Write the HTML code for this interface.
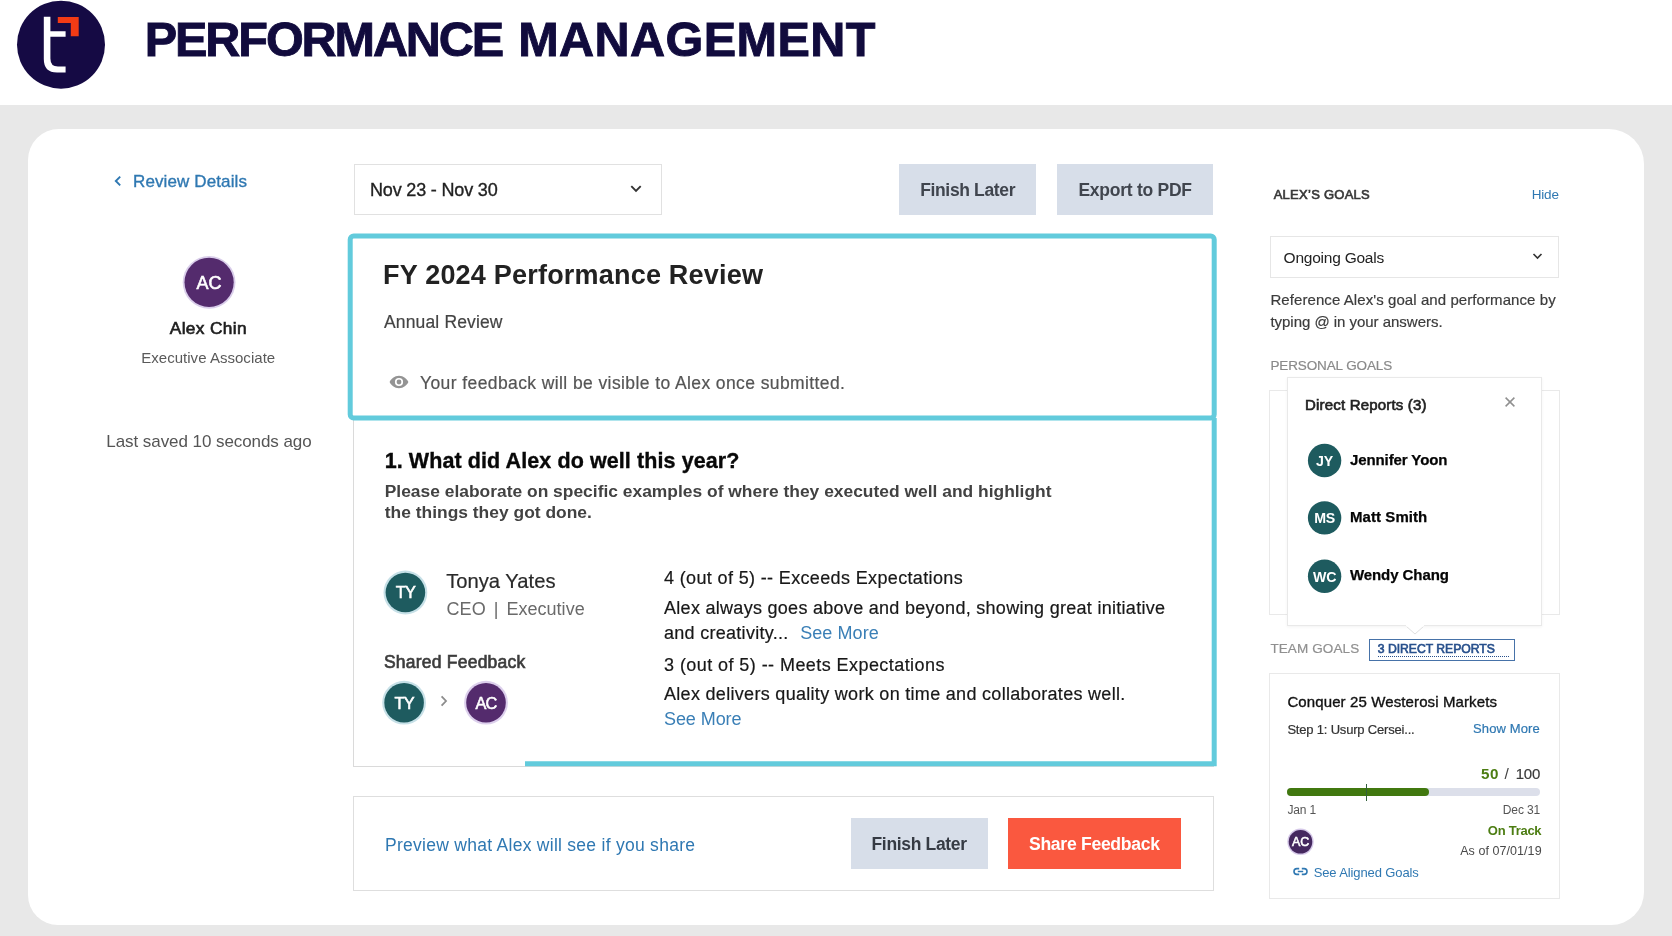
<!DOCTYPE html>
<html><head><meta charset="utf-8"><title>Performance Management</title>
<style>
html,body{margin:0;padding:0;}
body{width:1672px;height:936px;overflow:hidden;background:#e8e8e8;position:relative;font-family:"Liberation Sans",sans-serif;}
.b{position:absolute;display:block;}
.t{position:absolute;white-space:nowrap;display:block;}
.av{position:absolute;color:#fff;text-align:center;font-weight:400;-webkit-text-stroke:0.55px #fff;white-space:nowrap;}
#root{position:absolute;left:0;top:0;width:1672px;height:936px;will-change:transform;}
</style></head><body><div id="root">
<div class="b" style="left:0.0px;top:0.0px;width:1672.0px;height:104.7px;background:#fff;"></div>
<div class="b" style="left:27.5px;top:128.7px;width:1616.6px;height:796.2px;background:#fff;border-radius:31px 35px 33px 30px;"></div>
<svg class="b" style="left:16px;top:0px" width="92" height="92" viewBox="0 0 92 92">
<circle cx="45" cy="44.7" r="44" fill="#150a44"/>
<path d="M27.8 16.7 H34.4 V31.2 H49.6 V36.8 H34.4 V58.5 Q34.4 66.6 42 66.6 H49.6 V72.5 H41 Q27.8 72.5 27.8 59 Z" fill="#fff"/>
<path d="M41.8 17 H62.7 V36.2 H54.8 V22.9 H41.8 Z" fill="#f33b15"/>
</svg>
<svg class="b" style="left:111.6px;top:174px" width="12" height="14" viewBox="0 0 12 14"><path d="M8.2 2.6 L3.8 7 L8.2 11.4" fill="none" stroke="#2f78b2" stroke-width="1.9"/></svg>
<svg class="b" style="left:181px;top:254px" width="56" height="56" viewBox="0 0 56 56"><circle cx="28.10" cy="28.30" r="26.40" fill="#d9cdea"/><circle cx="28.10" cy="28.30" r="24.60" fill="#542b6d"/></svg><div class="av" style="left:179.10px;top:258.10px;width:60px;height:50px;font-size:18px;line-height:50px;letter-spacing:0px;">AC</div>
<div class="b" style="left:354.0px;top:164.0px;width:308.0px;height:50.5px;border:1px solid #e1e1e1;box-sizing:border-box;background:#fff;"></div>
<svg class="b" style="left:629px;top:183px" width="14" height="12" viewBox="0 0 14 12"><path d="M2.3 3.2 L7 7.9 L11.7 3.2" fill="none" stroke="#333" stroke-width="1.9"/></svg>
<div class="b" style="left:899.2px;top:164.0px;width:136.8px;height:50.5px;background:#d7dee9;"></div>
<div class="b" style="left:1057.0px;top:164.0px;width:156.0px;height:50.5px;background:#d7dee9;"></div>
<div class="b" style="left:353.0px;top:418.0px;width:861.0px;height:349.0px;border:1px solid #dadada;box-sizing:border-box;"></div>
<svg class="b" style="left:340px;top:225px" width="890" height="550" viewBox="340 225 890 550">
<rect x="350.2" y="236" width="864" height="182" rx="3.5" fill="none" stroke="#62cbdc" stroke-width="5"/>
<path d="M1214.2 418 V763.8 H525" fill="none" stroke="#62cbdc" stroke-width="5"/>
</svg>
<svg class="b" style="left:389px;top:374px" width="20" height="16" viewBox="0 0 20 16"><path d="M10 1.8 C5.5 1.8 2 5 0.6 8 C2 11 5.5 14.2 10 14.2 C14.5 14.2 18 11 19.4 8 C18 5 14.5 1.8 10 1.8 Z M10 12.1 A4.1 4.1 0 1 1 10 3.9 A4.1 4.1 0 0 1 10 12.1 Z M10 5.6 A2.4 2.4 0 1 0 10 10.4 A2.4 2.4 0 0 0 10 5.6 Z" fill="#949494" fill-rule="evenodd"/></svg>
<svg class="b" style="left:382px;top:569px" width="47" height="47" viewBox="0 0 47 47"><circle cx="23.40" cy="23.50" r="21.90" fill="#c6e0e7"/><circle cx="23.40" cy="23.50" r="19.80" fill="#1e5b5f"/></svg><div class="av" style="left:375.40px;top:572.30px;width:60px;height:40px;font-size:16.3px;line-height:40px;letter-spacing:-0.7px;">TY</div>
<svg class="b" style="left:381px;top:679px" width="47" height="47" viewBox="0 0 47 47"><circle cx="23.10" cy="23.70" r="21.90" fill="#c6e0e7"/><circle cx="23.10" cy="23.70" r="19.80" fill="#1e5b5f"/></svg><div class="av" style="left:374.10px;top:682.50px;width:60px;height:40px;font-size:16.3px;line-height:40px;letter-spacing:-0.7px;">TY</div>
<svg class="b" style="left:463px;top:679px" width="47" height="47" viewBox="0 0 47 47"><circle cx="23.00" cy="23.70" r="21.90" fill="#dccfec"/><circle cx="23.00" cy="23.70" r="19.80" fill="#542b6d"/></svg><div class="av" style="left:456.00px;top:682.50px;width:60px;height:40px;font-size:16.3px;line-height:40px;letter-spacing:-0.7px;">AC</div>
<svg class="b" style="left:438px;top:693.5px" width="12" height="14" viewBox="0 0 12 14"><path d="M3.6 2.4 L8 7 L3.6 11.6" fill="none" stroke="#8c8c8c" stroke-width="1.8"/></svg>
<div class="b" style="left:353.0px;top:796.3px;width:860.5px;height:94.7px;border:1px solid #dedede;box-sizing:border-box;"></div>
<div class="b" style="left:851.0px;top:818.0px;width:137.0px;height:50.6px;background:#d7dee9;"></div>
<div class="b" style="left:1008.0px;top:818.0px;width:173.3px;height:50.6px;background:#fa583f;"></div>
<div class="b" style="left:1270.0px;top:236.0px;width:288.6px;height:41.5px;border:1px solid #e6e6e6;box-sizing:border-box;"></div>
<svg class="b" style="left:1531px;top:251px" width="13" height="11" viewBox="0 0 13 11"><path d="M2.5 3 L6.5 7 L10.5 3" fill="none" stroke="#333" stroke-width="1.6"/></svg>
<div class="b" style="left:1269.0px;top:390.0px;width:291.0px;height:225.3px;border:1px solid #e9e9e9;box-sizing:border-box;"></div>
<div class="b" style="left:1287.0px;top:376.8px;width:255.4px;height:249.6px;border:1px solid #e9e9e9;box-sizing:border-box;background:#fff;box-shadow:0 1px 3px rgba(0,0,0,0.05);"></div>
<svg class="b" style="left:1404px;top:624.6px" width="22" height="11" viewBox="0 0 22 11"><path d="M2 1 L11 9 L20 1" fill="#fff" stroke="#e0e0e0" stroke-width="1"/><rect x="2" y="0" width="18" height="1.6" fill="#fff"/></svg>
<svg class="b" style="left:1503px;top:395px" width="14" height="14" viewBox="0 0 14 14"><path d="M2.6 2.6 L11.4 11.4 M11.4 2.6 L2.6 11.4" fill="none" stroke="#909090" stroke-width="1.5"/></svg>
<svg class="b" style="left:1306px;top:442px" width="37" height="37" viewBox="0 0 37 37"><circle cx="18.60" cy="18.50" r="16.70" fill="#1e5b5f"/></svg><div class="av" style="left:1294.60px;top:443.80px;width:60px;height:34px;font-size:14.2px;line-height:34px;letter-spacing:-0.2px;font-weight:700;-webkit-text-stroke:0;">JY</div>
<svg class="b" style="left:1306px;top:500px" width="37" height="37" viewBox="0 0 37 37"><circle cx="18.60" cy="17.90" r="16.70" fill="#1e5b5f"/></svg><div class="av" style="left:1294.60px;top:501.20px;width:60px;height:34px;font-size:14.2px;line-height:34px;letter-spacing:-0.2px;font-weight:700;-webkit-text-stroke:0;">MS</div>
<svg class="b" style="left:1306px;top:558px" width="37" height="37" viewBox="0 0 37 37"><circle cx="18.60" cy="18.20" r="16.70" fill="#1e5b5f"/></svg><div class="av" style="left:1294.60px;top:559.50px;width:60px;height:34px;font-size:14.2px;line-height:34px;letter-spacing:-0.2px;font-weight:700;-webkit-text-stroke:0;">WC</div>
<div class="b" style="left:1369.0px;top:639.0px;width:146.0px;height:22.0px;border:1px solid #4672a8;box-sizing:border-box;"></div>
<div class="b" style="left:1377.8px;top:656.2px;width:130.8px;height:1.4px;border-top:1.4px dotted #28508c;height:0;"></div>
<div class="b" style="left:1269.0px;top:673.0px;width:291.0px;height:225.7px;border:1px solid #e9e9e9;box-sizing:border-box;"></div>
<div class="b" style="left:1287.4px;top:788.3px;width:252.9px;height:8.0px;background:#dcdfea;border-radius:4px;"></div>
<div class="b" style="left:1287.4px;top:788.3px;width:141.7px;height:8.0px;background:#41780f;border-radius:4px;"></div>
<div class="b" style="left:1365.5px;top:784.0px;width:1.2px;height:16.5px;background:#32603a;"></div>
<svg class="b" style="left:1286px;top:827px" width="30" height="30" viewBox="0 0 30 30"><circle cx="14.50" cy="14.80" r="13.20" fill="#d5c8e8"/><circle cx="14.50" cy="14.80" r="11.80" fill="#45285f"/></svg><div class="av" style="left:1270.50px;top:830.10px;width:60px;height:24px;font-size:12.5px;line-height:24px;letter-spacing:-0.3px;">AC</div>
<svg class="b" style="left:1292px;top:865.2px" width="17" height="13" viewBox="0 0 17 13"><path d="M7.2 3.6 H4.9 A2.9 2.9 0 0 0 4.9 9.4 H7.2 M9.8 3.6 H12.1 A2.9 2.9 0 0 1 12.1 9.4 H9.8 M5.8 6.5 H11.2" fill="none" stroke="#2f78b2" stroke-width="1.6"/></svg>
<span class="t" style="left:144.8px;top:7.7px;font-size:48.6px;line-height:63px;color:#110b3d;font-weight:700;letter-spacing:-2.127px;-webkit-text-stroke:0.9px #110b3d;">PERFORMANCE</span>
<span class="t" style="left:518.2px;top:7.7px;font-size:48.6px;line-height:63px;color:#110b3d;font-weight:700;letter-spacing:0.395px;-webkit-text-stroke:0.9px #110b3d;">MANAGEMENT</span>
<span class="t" style="left:133.0px;top:171.0px;font-size:17px;line-height:22px;color:#2f78b2;font-weight:400;-webkit-text-stroke:0.35px #2f78b2;letter-spacing:0.120px;">Review Details</span>
<span class="t" style="left:169.8px;top:316.7px;font-size:17.3px;line-height:22px;color:#1e1e1e;font-weight:400;-webkit-text-stroke:0.65px #1e1e1e;letter-spacing:0.354px;">Alex Chin</span>
<span class="t" style="left:141.2px;top:347.5px;font-size:15px;line-height:20px;color:#5a5a5a;font-weight:400;letter-spacing:0.033px;">Executive Associate</span>
<span class="t" style="left:106.3px;top:431.0px;font-size:17px;line-height:22px;color:#555;font-weight:400;letter-spacing:-0.066px;">Last saved 10 seconds ago</span>
<span class="t" style="left:370.0px;top:179.0px;font-size:18px;line-height:23px;color:#222;font-weight:400;-webkit-text-stroke:0.35px #222;letter-spacing:-0.169px;">Nov 23 - Nov 30</span>
<span class="t" style="left:920.2px;top:178.6px;font-size:17.5px;line-height:23px;color:#40454e;font-weight:700;letter-spacing:-0.353px;">Finish Later</span>
<span class="t" style="left:1078.4px;top:178.6px;font-size:17.5px;line-height:23px;color:#40454e;font-weight:700;letter-spacing:-0.256px;">Export to PDF</span>
<span class="t" style="left:383.0px;top:257.5px;font-size:27px;line-height:35px;color:#222;font-weight:700;letter-spacing:0.211px;">FY 2024 Performance Review</span>
<span class="t" style="left:384.0px;top:311.0px;font-size:17.5px;line-height:23px;color:#444;font-weight:400;-webkit-text-stroke:0.2px #444;letter-spacing:0.147px;">Annual Review</span>
<span class="t" style="left:420.0px;top:372.1px;font-size:17.5px;line-height:23px;color:#555;font-weight:400;-webkit-text-stroke:0.2px #555;letter-spacing:0.403px;">Your feedback will be visible to Alex once submitted.</span>
<span class="t" style="left:384.7px;top:447.0px;font-size:21.5px;line-height:28px;color:#080808;font-weight:700;letter-spacing:0.090px;-webkit-text-stroke:0.35px #080808;">1. What did Alex do well this year?</span>
<span class="t" style="left:384.7px;top:479.5px;font-size:17.4px;line-height:23px;color:#424242;font-weight:700;letter-spacing:0.012px;">Please elaborate on specific examples of where they executed well and highlight</span>
<span class="t" style="left:384.7px;top:501.0px;font-size:17.4px;line-height:23px;color:#424242;font-weight:700;letter-spacing:0.019px;">the things they got done.</span>
<span class="t" style="left:446.2px;top:568.0px;font-size:20.2px;line-height:26px;color:#2a2a2a;font-weight:400;-webkit-text-stroke:0.2px #2a2a2a;letter-spacing:0.005px;">Tonya Yates</span>
<span class="t" style="left:446.6px;top:597.7px;font-size:18px;line-height:23px;color:#6a6a6a;font-weight:400;letter-spacing:0.026px;word-spacing:3px;">CEO | Executive</span>
<span class="t" style="left:383.9px;top:651.3px;font-size:17.5px;line-height:23px;color:#3c3c3c;font-weight:400;-webkit-text-stroke:0.65px #3c3c3c;letter-spacing:0.232px;">Shared Feedback</span>
<span class="t" style="left:664.0px;top:567.1px;font-size:18px;line-height:23px;color:#181818;font-weight:400;-webkit-text-stroke:0.2px #181818;letter-spacing:0.359px;">4 (out of 5) -- Exceeds Expectations</span>
<span class="t" style="left:664.0px;top:596.7px;font-size:18px;line-height:23px;color:#181818;font-weight:400;-webkit-text-stroke:0.2px #181818;letter-spacing:0.288px;">Alex always goes above and beyond, showing great initiative</span>
<span class="t" style="left:664.0px;top:622.0px;font-size:18px;line-height:23px;color:#181818;font-weight:400;-webkit-text-stroke:0.2px #181818;letter-spacing:0.286px;">and creativity...</span>
<span class="t" style="left:800.2px;top:622.0px;font-size:18px;line-height:23px;color:#3a7fb6;font-weight:400;letter-spacing:0.079px;">See More</span>
<span class="t" style="left:664.0px;top:653.8px;font-size:18px;line-height:23px;color:#181818;font-weight:400;-webkit-text-stroke:0.2px #181818;letter-spacing:0.433px;">3 (out of 5) -- Meets Expectations</span>
<span class="t" style="left:664.0px;top:683.4px;font-size:18px;line-height:23px;color:#181818;font-weight:400;-webkit-text-stroke:0.2px #181818;letter-spacing:0.305px;">Alex delivers quality work on time and collaborates well.</span>
<span class="t" style="left:664.0px;top:708.1px;font-size:18px;line-height:23px;color:#3a7fb6;font-weight:400;letter-spacing:-0.078px;">See More</span>
<span class="t" style="left:385.0px;top:833.5px;font-size:17.5px;line-height:23px;color:#2f78b2;font-weight:400;letter-spacing:0.274px;">Preview what Alex will see if you share</span>
<span class="t" style="left:871.5px;top:832.6px;font-size:17.5px;line-height:23px;color:#363b44;font-weight:700;letter-spacing:-0.335px;">Finish Later</span>
<span class="t" style="left:1029.0px;top:833.1px;font-size:17.6px;line-height:23px;color:#fff;font-weight:700;letter-spacing:-0.304px;">Share Feedback</span>
<span class="t" style="left:1273.7px;top:185.7px;font-size:13px;line-height:17px;color:#383838;font-weight:400;-webkit-text-stroke:0.65px #383838;letter-spacing:0.262px;">ALEX’S GOALS</span>
<span class="t" style="left:1531.7px;top:186.0px;font-size:13.5px;line-height:18px;color:#2f78b2;font-weight:400;letter-spacing:-0.189px;">Hide</span>
<span class="t" style="left:1283.6px;top:248.0px;font-size:15.5px;line-height:20px;color:#222;font-weight:400;letter-spacing:-0.234px;">Ongoing Goals</span>
<span class="t" style="left:1270.4px;top:289.7px;font-size:15px;line-height:20px;color:#3c3c3c;font-weight:400;-webkit-text-stroke:0.2px #3c3c3c;letter-spacing:0.079px;">Reference Alex&#x27;s goal and performance by</span>
<span class="t" style="left:1270.4px;top:311.5px;font-size:15px;line-height:20px;color:#3c3c3c;font-weight:400;-webkit-text-stroke:0.2px #3c3c3c;letter-spacing:-0.026px;">typing @ in your answers.</span>
<span class="t" style="left:1270.4px;top:357.4px;font-size:13.5px;line-height:18px;color:#8a8a8a;font-weight:400;-webkit-text-stroke:0.2px #8a8a8a;letter-spacing:-0.115px;">PERSONAL GOALS</span>
<span class="t" style="left:1305.0px;top:395.0px;font-size:15px;line-height:20px;color:#222;font-weight:400;-webkit-text-stroke:0.65px #222;letter-spacing:0.185px;">Direct Reports (3)</span>
<span class="t" style="left:1349.9px;top:450.2px;font-size:15px;line-height:20px;color:#050505;font-weight:700;letter-spacing:-0.087px;-webkit-text-stroke:0.25px #050505;">Jennifer Yoon</span>
<span class="t" style="left:1349.9px;top:507.2px;font-size:15px;line-height:20px;color:#050505;font-weight:700;letter-spacing:0.081px;-webkit-text-stroke:0.25px #050505;">Matt Smith</span>
<span class="t" style="left:1349.9px;top:565.2px;font-size:15px;line-height:20px;color:#050505;font-weight:700;letter-spacing:-0.063px;-webkit-text-stroke:0.25px #050505;">Wendy Chang</span>
<span class="t" style="left:1270.4px;top:640.4px;font-size:13.5px;line-height:18px;color:#909090;font-weight:400;-webkit-text-stroke:0.2px #909090;letter-spacing:0.113px;">TEAM GOALS</span>
<span class="t" style="left:1377.8px;top:640.8px;font-size:12.2px;line-height:16px;color:#28508c;font-weight:400;-webkit-text-stroke:0.65px #28508c;letter-spacing:-0.026px;">3 DIRECT REPORTS</span>
<span class="t" style="left:1287.4px;top:691.7px;font-size:15px;line-height:20px;color:#111;font-weight:400;-webkit-text-stroke:0.35px #111;letter-spacing:0.115px;">Conquer 25 Westerosi Markets</span>
<span class="t" style="left:1287.4px;top:720.9px;font-size:13px;line-height:17px;color:#333;font-weight:400;-webkit-text-stroke:0.2px #333;letter-spacing:-0.191px;">Step 1: Usurp Cersei...</span>
<span class="t" style="left:1473.0px;top:720.2px;font-size:13px;line-height:17px;color:#2f78b2;font-weight:400;-webkit-text-stroke:0.2px #2f78b2;letter-spacing:0.119px;">Show More</span>
<span class="t" style="left:1481.0px;top:763.7px;font-size:15.2px;line-height:20px;color:#4c7d12;font-weight:700;letter-spacing:0.594px;">50</span>
<span class="t" style="left:1504.4px;top:763.5px;font-size:15.5px;line-height:20px;color:#444;font-weight:400;letter-spacing:0.000px;">/</span>
<span class="t" style="left:1515.8px;top:763.5px;font-size:15px;line-height:20px;color:#3a3a3a;font-weight:400;-webkit-text-stroke:0.2px #3a3a3a;letter-spacing:-0.266px;">100</span>
<span class="t" style="left:1287.4px;top:801.8px;font-size:12px;line-height:16px;color:#555;font-weight:400;letter-spacing:-0.115px;">Jan 1</span>
<span class="t" style="left:1502.8px;top:801.8px;font-size:12px;line-height:16px;color:#555;font-weight:400;letter-spacing:-0.106px;">Dec 31</span>
<span class="t" style="left:1487.8px;top:822.1px;font-size:13px;line-height:17px;color:#4c7d12;font-weight:700;letter-spacing:-0.263px;">On Track</span>
<span class="t" style="left:1460.2px;top:843.3px;font-size:12.5px;line-height:16px;color:#4a4a4a;font-weight:400;letter-spacing:0.060px;">As of 07/01/19</span>
<span class="t" style="left:1313.7px;top:863.6px;font-size:13px;line-height:17px;color:#2f78b2;font-weight:400;letter-spacing:-0.117px;">See Aligned Goals</span>
</div></body></html>
